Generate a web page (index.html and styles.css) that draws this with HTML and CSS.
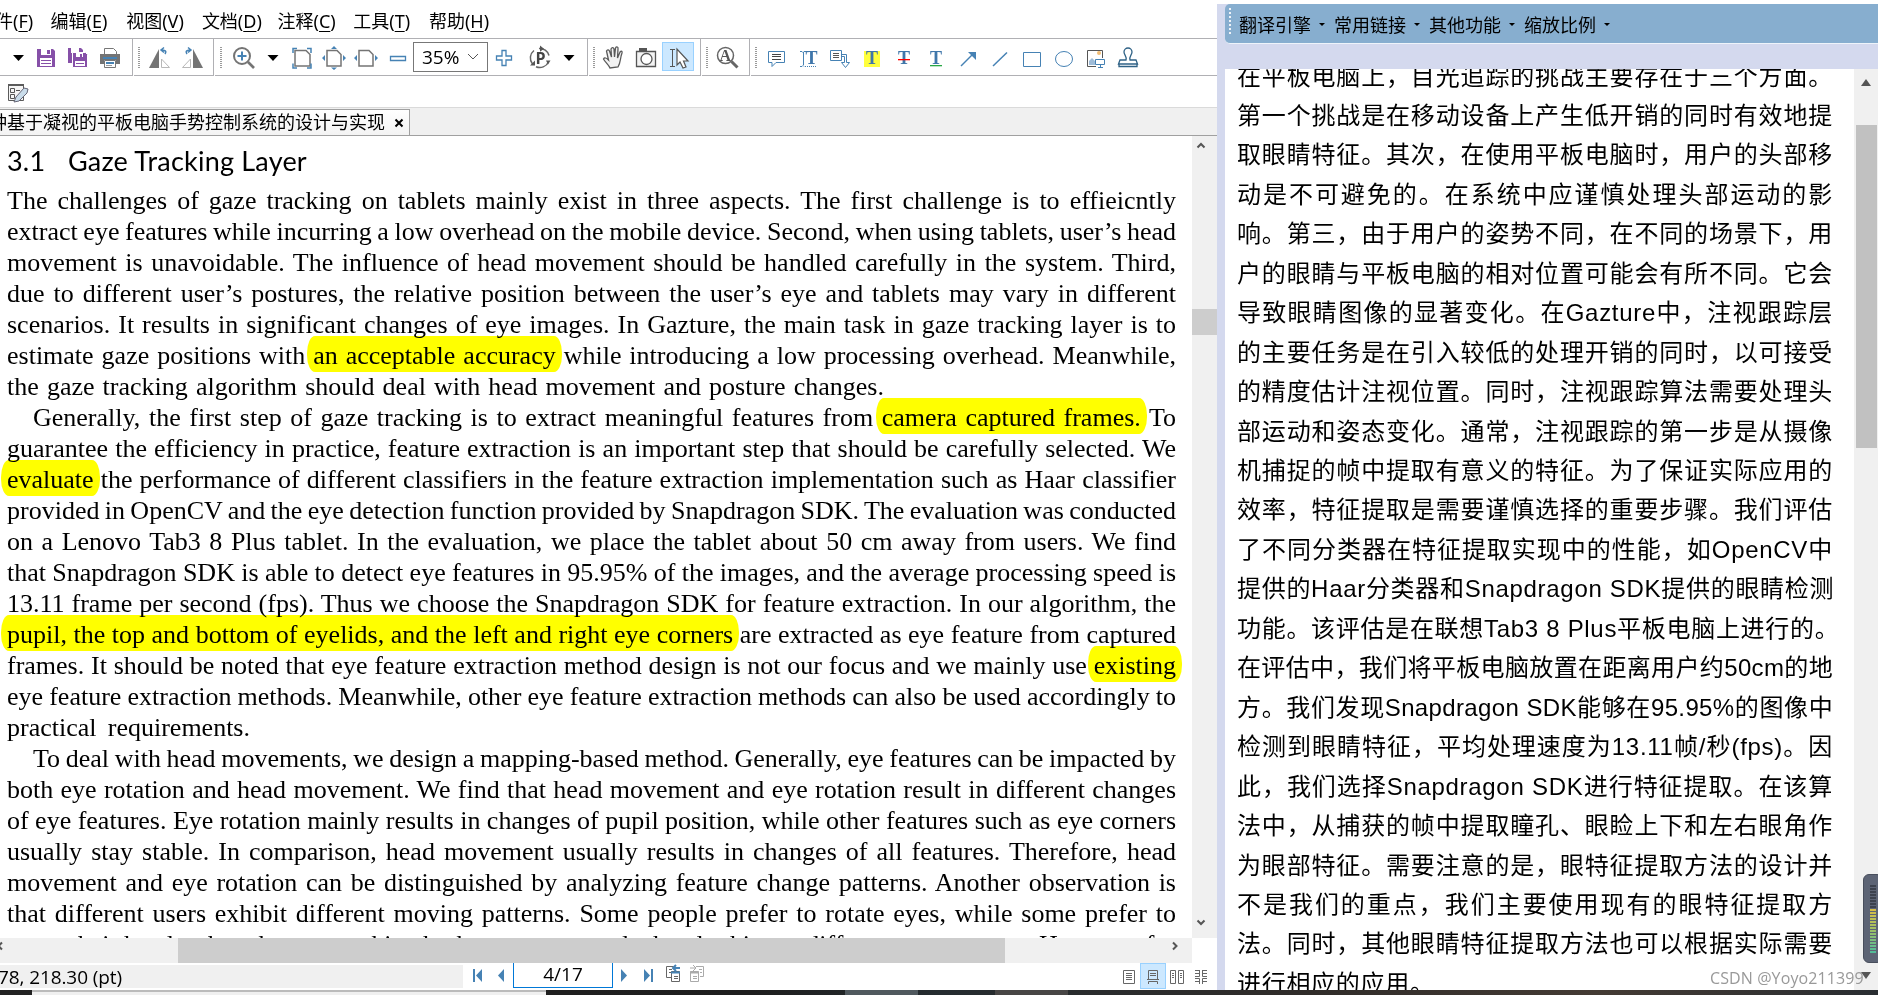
FILE: index.html
```html
<!DOCTYPE html>
<html lang="zh-CN">
<head>
<meta charset="utf-8">
<title>PDF Reader</title>
<link rel="stylesheet" href="styles.css">
</head>
<body>
<div class="screen">
<main class="windows">
<section class="reader">
  <nav class="menu"><span>件(<u>F</u>)</span><span>编辑(<u>E</u>)</span><span>视图(<u>V</u>)</span><span>文档(<u>D</u>)</span><span>注释(<u>C</u>)</span><span>工具(<u>T</u>)</span><span>帮助(<u>H</u>)</span></nav>
  <div class="tools">
    <div class="group g1">
      <svg class="tri" viewBox="0 0 22 32"><path d="M5 13h11l-5.500 6z"/></svg>
      <svg viewBox="0 0 32 32"><path fill="#8650a8" d="M7 7h16l2 2v16H7z"/><path fill="#fff" d="M11 7h10v6H11zM10 16h12v8H10z"/><path fill="#8650a8" d="M17 8h3v4h-3zM11 18h10v1H11zM11 21h10v1H11z"/></svg>
      <svg viewBox="0 0 32 32"><path fill="#8650a8" d="M6 6h13l2 2v13H6z"/><path fill="#fff" d="M9 6h8v5H9z"/><path fill="#8650a8" stroke="#fff" d="M10.500 10.500h13l2 2v13h-15z"/><path fill="#fff" d="M14 11h7v4h-7zM13 19h10v5H13z"/><path fill="#8650a8" d="M18 12h2v3h-2zM14 21h8v1h-8z"/></svg>
      <svg viewBox="0 0 32 32"><path fill="#fff" stroke="#777" d="M10.500 12V6.500h9l3 3V12"/><path fill="#747474" d="M6 12h20v10h-4v-4H10v4H6z"/><path fill="#fff" stroke="#777" d="M10.500 18.500h11v7h-11z"/><path stroke="#4682b4" stroke-width="2" d="M9 16h14M12 21h8"/><path stroke="#999" d="M12 23.500h6"/></svg>
    </div>
    <div class="group g2"><i class="grip"></i>
      <svg viewBox="0 0 32 32"><path fill="#747474" d="M15 7v19H5z"/><path fill="#fff" stroke="#b8b8b8" d="M17.500 17v8.500h8z"/><path fill="none" stroke="#4682b4" stroke-width="1.500" d="M21 12c2-3 0-4-4-4m3-2.500L17 8l3 2.500"/></svg>
      <svg viewBox="0 0 32 32"><path fill="#747474" d="M17 7v19h10z"/><path fill="#fff" stroke="#b8b8b8" d="M14.500 17v8.500h-8z"/><path fill="none" stroke="#4682b4" stroke-width="1.500" d="M11 12c-2-3 0-4 4-4m-3-2.500L15 8l-3 2.500"/></svg>
    </div>
    <div class="group g3"><i class="grip"></i>
      <svg viewBox="0 0 32 32"><circle cx="14" cy="14" r="8" fill="#fff" stroke="#747474" stroke-width="2"/><path stroke="#4682b4" stroke-width="2" d="M9.500 14h9M14 9.500v9"/><path stroke="#747474" stroke-width="2.600" d="M20 20l6 6"/></svg>
      <svg class="tri wide" viewBox="0 0 26 32"><path d="M7.500 13h11L13 19z"/></svg>
      <svg viewBox="0 0 32 32" fill="none"><path stroke="#747474" stroke-width="1.500" d="M9 8.500h11l4 4V24H9z"/><path stroke="#4682b4" stroke-width="1.500" d="M7 11V6.500h4M21 6.500h4V11M7 21.500V26h4M21 26h4v-4.500"/></svg>
      <svg viewBox="0 0 32 32" fill="none"><path stroke="#747474" stroke-width="1.500" d="M9 8.500h10l4 4V24H9z"/><path fill="#4682b4" d="M13 7l3-3 3 3zM13 25.500l3 2.500 3-2.500zM7 13l-3 3 3 3zM25 13l3 3-3 3z"/></svg>
      <svg viewBox="0 0 32 32" fill="none"><path stroke="#747474" stroke-width="1.500" d="M9 8.500h10l4 4V24H9z"/><path fill="#4682b4" d="M7 13l-3 3 3 3zM25 13l3 3-3 3z"/></svg>
      <svg viewBox="0 0 32 32" fill="none"><path stroke="#4682b4" stroke-width="1.300" d="M8.500 14.500h15v4h-15z"/></svg>
      <div class="zoom"><span>35%</span><svg viewBox="0 0 12 8"><path fill="none" stroke="#555" d="M1 1l5 5 5-5"/></svg></div>
      <svg viewBox="0 0 32 32" fill="none"><path stroke="#4682b4" stroke-width="1.300" d="M14 8.500h4V14h5.500v4H18v5.500h-4V18H8.500v-4H14z"/></svg>
      <svg class="rotate" viewBox="0 0 32 32" fill="none"><path stroke="#666" stroke-width="1.500" d="M8.500 22A9.500 9.500 0 0 1 10 8.500M15 6.500A9.500 9.500 0 0 1 25 13.500M24.500 20A9.500 9.500 0 0 1 12 24.700"/><path fill="#555" d="M16 3.500l4 3.200-4 3zM6 23.500h5v-5zM22 18.500h4.500L24 22.500z"/><text x="11.500" y="22" class="bold-letter">P</text></svg>
      <svg class="tri wide" viewBox="0 0 26 32"><path d="M7.500 13h11L13 19z"/></svg>
    </div>
    <div class="group g4"><i class="grip"></i>
      <svg viewBox="0 0 32 32"><path fill="#f2f2f2" stroke="#5a5a5a" stroke-width="1.300" d="M12 26c-1-3-5-6-6.500-9 1-2 3-1 5 1L8.500 9c1-2 2.500-1 3 0l2 6L13 7c1-2 2.500-1.500 3 0l.5 8 1-9c1-2 3-1 2.500 1l-.5 9 2.500-6c1.500-1.500 2.500-.5 2 1-2 5-1 9-4 14z"/></svg>
      <svg viewBox="0 0 32 32"><path fill="#f3f3f3" stroke="#555" stroke-width="1.300" d="M6.500 9.500h19v15h-19z"/><path fill="#555" d="M9 6h8v4H9z"/><circle cx="16.500" cy="17" r="5.500" fill="#fff" stroke="#555" stroke-width="1.300"/></svg>
      <svg class="picked" viewBox="0 0 32 29" fill="none"><path stroke="#555" d="M8 7.500h5M8 24.500h5M10.500 8v16"/><path fill="#fff" stroke="#555" stroke-width="1.200" d="M15 7v16l3-3 3 6 3-1-2.500-6H26z"/></svg>
    </div>
    <div class="group g5"><i class="grip"></i>
      <svg viewBox="0 0 32 32"><circle cx="14.500" cy="13.500" r="8" fill="#fff" stroke="#666" stroke-width="1.500"/><text x="8.500" y="19" class="serif-letter">A</text><path stroke="#666" stroke-width="3" d="M20.500 19.500l6 6"/></svg>
    </div>
    <div class="group g6"><i class="grip"></i>
      <svg viewBox="0 0 32 32" fill="none"><path stroke="#4682b4" d="M8.500 9.500h16v11H16l-4 4v-4H8.500z"/><path stroke="#444" d="M12 12.500h9M12 14.500h9M12 17.500h9"/></svg>
      <svg viewBox="0 0 32 32" fill="none"><path stroke="#4682b4" d="M8 9.500h2l1 1 1-1h2M11.500 10v13M8 24.500h2l1-1 1 1"/><path stroke="#4682b4" stroke-dasharray="1 1" d="M13 24.500h12"/><text x="13.500" y="22" class="t-letter">T</text></svg>
      <svg viewBox="0 0 32 32" fill="none"><path stroke="#4682b4" d="M6.500 8.500h11v10h-11zM17.500 12.500h5v8h3l-4 5-4-5h3v-6h-3"/><path stroke="#555" d="M9 11.500h6M9 13.500h6M9 15.500h6"/></svg>
      <svg viewBox="0 0 32 32"><path fill="#ffff3d" d="M8 9h16v16H8z"/><text x="10" y="22" class="t-letter">T</text></svg>
      <svg viewBox="0 0 32 32"><text x="10" y="22" class="t-letter">T</text><path fill="red" d="M10 17h12v1.300H10z"/></svg>
      <svg viewBox="0 0 32 32"><text x="10" y="21.500" class="t-letter">T</text><path fill="#29a745" d="M10 23h12v1.300H10z"/></svg>
      <svg viewBox="0 0 32 32"><path stroke="#4682b4" stroke-width="1.500" d="M9 24l11-11"/><path fill="#4682b4" d="M16 10h8v8z"/></svg>
      <svg viewBox="0 0 32 32"><path stroke="#4682b4" stroke-width="1.500" d="M9 24L23 10.500"/></svg>
      <svg viewBox="0 0 32 32"><path fill="none" stroke="#4682b4" d="M7.500 10.500h17v14h-17z"/></svg>
      <svg viewBox="0 0 32 32"><ellipse cx="16" cy="17" rx="8.500" ry="7.500" fill="none" stroke="#4682b4"/></svg>
      <svg viewBox="0 0 32 32" fill="none"><path stroke="#555" d="M16 24.500H7.500v-16h15V16"/><circle cx="19" cy="11" r="2" fill="#f2bd75"/><path fill="#9fbcd8" d="M9 23v-4l3-3 3 3v4z"/><path stroke="#4682b4" d="M15.500 17.500h9v5h-9zM18 25.500h5M20.500 23v2"/></svg>
      <svg viewBox="0 0 32 32" fill="none"><path stroke="#2f6286" stroke-width="1.300" d="M14 18c1-4-2-5-2-8a4 4 0 0 1 8 0c0 3-3 4-2 8h6l1.500 4h-19L8 18zM7 22v2.500h18V22"/></svg>
    </div>
  </div>
  <div class="tools-second"><svg viewBox="0 0 24 24" fill="none"><path fill="#f5f5f5" stroke="#5b5b5b" d="M2.500 3.500h15v16h-15z"/><path fill="#5b5b5b" d="M2 3h16v2H2z"/><path stroke="#555" d="M4.500 7.500h4v4h-4zM4.500 13.500h4v4h-4zM10 9.500h4M10 15.500h3"/><path fill="#c9dcea" stroke="#667" d="M8 21l2-5 8-9 4 1-1 4-8 8z"/></svg></div>
  <div class="tabs"><div class="tab"><span>种基于凝视的平板电脑手势控制系统的设计与实现</span><svg viewBox="0 0 10 10"><path stroke="#000" stroke-width="2" d="M1.500 1.500l7 7M8.500 1.500l-7 7"/></svg></div></div>
  <div class="viewport">
    <article class="page" lang="en">
      <h2><span>3.1</span><span>Gaze Tracking Layer</span></h2>
      <p>The challenges of gaze tracking on tablets mainly exist in three aspects. The first challenge is to effieicntly</p>
      <p>extract eye features while incurring a low overhead on the mobile device. Second, when using tablets, user’s head</p>
      <p>movement is unavoidable. The influence of head movement should be handled carefully in the system. Third,</p>
      <p>due to different user’s postures, the relative position between the user’s eye and tablets may vary in different</p>
      <p>scenarios. It results in significant changes of eye images. In Gazture, the main task in gaze tracking layer is to</p>
      <p>estimate gaze positions with <mark>an acceptable accuracy</mark> while introducing a low processing overhead. Meanwhile,</p>
      <p class="w7">the gaze tracking algorithm should deal with head movement and posture changes.</p>
      <p class="first">Generally, the first step of gaze tracking is to extract meaningful features from <mark>camera captured frames.</mark> To</p>
      <p>guarantee the efficiency in practice, feature extraction is an important step that should be carefully selected. We</p>
      <p><mark>evaluate</mark> the performance of different classifiers in the feature extraction implementation such as Haar classifier</p>
      <p>provided in OpenCV and the eye detection function provided by Snapdragon SDK. The evaluation was conducted</p>
      <p>on a Lenovo Tab3 8 Plus tablet. In the evaluation, we place the tablet about 50 cm away from users. We find</p>
      <p>that Snapdragon SDK is able to detect eye features in 95.95% of the images, and the average processing speed is</p>
      <p>13.11 frame per second (fps). Thus we choose the Snapdragon SDK for feature extraction. In our algorithm, the</p>
      <p><mark>pupil, the top and bottom of eyelids, and the left and right eye corners</mark> are extracted as eye feature from captured</p>
      <p>frames. It should be noted that eye feature extraction method design is not our focus and we mainly use <mark>existing</mark></p>
      <p>eye feature extraction methods. Meanwhile, other eye feature extraction methods can also be used accordingly to</p>
      <p class="w18">practical requirements.</p>
      <p class="first">To deal with head movements, we design a mapping-based method. Generally, eye features can be impacted by</p>
      <p>both eye rotation and head movement. We find that head movement and eye rotation result in different changes</p>
      <p>of eye features. Eye rotation mainly results in changes of pupil position, while other features such as eye corners</p>
      <p>usually stay stable. In comparison, head movement usually results in changes of all features. Therefore, head</p>
      <p>movement and eye rotation can be distinguished by analyzing feature change patterns. Another observation is</p>
      <p>that different users exhibit different moving patterns. Some people prefer to rotate eyes, while some prefer to</p>
      <p>move their heads when they are making both eyes move and when looking at different screen areas. However, for</p>
    </article>
    <div class="vbar"><svg viewBox="0 0 10 8"><path d="M1.500 6.500L5 3l3.500 3.500"/></svg><i></i><svg viewBox="0 0 10 8"><path d="M1.500 1.500L5 5l3.500-3.500"/></svg></div>
  </div>
  <div class="hbar"><div class="track"><svg class="left" viewBox="0 0 8 10"><path d="M2 1.500L-1.500 5 2 8.500"/></svg><i></i><svg class="right" viewBox="0 0 8 10"><path d="M2 1.500L5.500 5 2 8.500"/></svg></div></div>
  <footer class="status">
    <div class="coords">78, 218.30 (pt)</div>
    <div class="pager">
      <svg viewBox="0 0 24 24"><path d="M8 6h2v13H8zM17 6v13l-6-6.500z"/></svg><svg viewBox="0 0 24 24"><path d="M15 6v13l-6-6.500z"/></svg>
      <div class="number">4/17</div>
      <svg viewBox="0 0 24 24"><path d="M8 6v13l6-6.500z"/></svg><svg viewBox="0 0 24 24"><path d="M14 6h2v13h-2zM7 6v13l6-6.500z"/></svg>
      <svg class="outline" viewBox="0 0 24 24"><path d="M11 14.500H5.500v-11h7"/><path d="M8 6.500h3M8 9.500h2M10.500 8.500h8v10h-8zM13 13.500h4M13 15.500h4"/><path class="blue" stroke-width="2" d="M10 9.500h9M13 5h6m-4-3l-3 3 3 3"/></svg>
      <svg class="outline faint" viewBox="0 0 24 24"><path d="M5.500 8.500h8v10h-8zM8 13.500h4M8 15.500h4M11 3.500h7.500v10H15M5 5h6M8 2l3 3-3 3M14 6.500h3M15 9.500h2"/><path stroke-width="2" d="M5 9.500h9"/></svg>
    </div>
    <div class="views">
      <svg viewBox="0 0 24 24"><path d="M6.500 6.500h11v13h-11zM9 9.500h6M9 11.500h6M9 13.500h6M9 15.500h6"/></svg>
      <svg class="picked" viewBox="0 0 24 24"><path d="M7.500 6.500h9v9h-9zM9 9.500h6M9 11.500h6M6 15.500h12M7.500 20v-2.500h9V20"/></svg>
      <svg viewBox="0 0 24 24"><path d="M5.500 6.500h5v13h-5zM13.500 6.500h5v13h-5zM7 9.500h2M7 11.500h2M7 13.500h2M15 9.500h2M15 11.500h2M15 13.500h2"/></svg>
      <svg viewBox="0 0 24 24"><path d="M10.500 6v6.500H6M13.500 6v6.500H18M10.500 20v-5.500H6M13.500 20v-5.500H18M6 6.500h4M14 6.500h4M6 9.500h4M14 9.500h4M6 17.500h4M14 17.500h4"/></svg>
    </div>
  </footer>
</section>
<section class="translator">
  <header><i class="dots"></i><span>翻译引擎</span><span>常用链接</span><span>其他功能</span><span>缩放比例</span></header>
  <div class="result">
    <div class="text">
      <p>在平板电脑上，目光追踪的挑战主要存在于三个方面。</p>
      <p>第一个挑战是在移动设备上产生低开销的同时有效地提</p>
      <p>取眼睛特征。其次，在使用平板电脑时，用户的头部移</p>
      <p>动是不可避免的。在系统中应谨慎处理头部运动的影</p>
      <p>响。第三，由于用户的姿势不同，在不同的场景下，用</p>
      <p>户的眼睛与平板电脑的相对位置可能会有所不同。它会</p>
      <p>导致眼睛图像的显著变化。在Gazture中，注视跟踪层</p>
      <p>的主要任务是在引入较低的处理开销的同时，以可接受</p>
      <p>的精度估计注视位置。同时，注视跟踪算法需要处理头</p>
      <p>部运动和姿态变化。通常，注视跟踪的第一步是从摄像</p>
      <p>机捕捉的帧中提取有意义的特征。为了保证实际应用的</p>
      <p>效率，特征提取是需要谨慎选择的重要步骤。我们评估</p>
      <p>了不同分类器在特征提取实现中的性能，如OpenCV中</p>
      <p>提供的Haar分类器和Snapdragon SDK提供的眼睛检测</p>
      <p>功能。该评估是在联想Tab3 8 Plus平板电脑上进行的。</p>
      <p class="tight">在评估中，我们将平板电脑放置在距离用户约50cm的地</p>
      <p class="tight">方。我们发现Snapdragon SDK能够在95.95%的图像中</p>
      <p>检测到眼睛特征，平均处理速度为13.11帧/秒(fps)。因</p>
      <p>此，我们选择Snapdragon SDK进行特征提取。在该算</p>
      <p>法中，从捕获的帧中提取瞳孔、眼睑上下和左右眼角作</p>
      <p>为眼部特征。需要注意的是，眼特征提取方法的设计并</p>
      <p>不是我们的重点，我们主要使用现有的眼特征提取方</p>
      <p>法。同时，其他眼睛特征提取方法也可以根据实际需要</p>
      <p class="end">进行相应的应用。</p>
    </div>
    <div class="rbar"><b class="up"></b><i></i><b class="down"></b></div>
  </div>
</section>
</main>
<div class="taskbar"><i class="preview"></i><i class="app one"></i><i class="app two"></i></div>
<div class="watermark">CSDN @Yoyo211399</div>
<div class="meter"><i class="off"></i><i class="on"></i></div>
</div>
</body>
</html>
```
FILE: styles.css
```css
* { box-sizing: border-box; }
body { margin: 0; background: #fff; color: #000; font: 18px/24px "Open Sans", "Noto Sans CJK SC", sans-serif; }
p, h2 { margin: 0; font-weight: 400; }
svg { display: block; flex: none; }
.screen { position: relative; width: 1878px; height: 995px; overflow: hidden; display: flex; flex-direction: column; }
.windows { display: flex; height: 990px; }
.reader { width: 1217px; display: flex; flex-direction: column; overflow: hidden; }
.menu { height: 38px; padding-top: 9px; display: flex; gap: 17px; font-family: "Noto Sans", "Noto Sans CJK SC", sans-serif; white-space: nowrap; }
.menu span { width: 58.700px; }
.menu span:first-child { width: 33.500px; text-indent: -5px; }
.menu u { text-underline-offset: 3px; text-decoration-thickness: 1px; }
.tools { height: 38px; display: flex; gap: 1px; border-top: 1px solid #b0b0b4; }
.group { display: flex; padding-top: 3px; border-right: 1px solid #b0b0b4; border-bottom: 1px solid #b0b0b4; }
.group > svg { width: 32px; height: 32px; }
.group > .tri { width: 22px; }
.group > .wide { width: 26px; }
.g1 { width: 133px; padding-left: 8px; }
.g2 { width: 80px; padding-left: 4px; }
.g3 { width: 373px; padding-left: 5px; }
.g4 { width: 112px; padding-left: 4px; }
.g5 { width: 48px; padding-left: 4px; }
.g6 { flex: 1; padding-left: 4px; border-right: 0; }
.grip { width: 2px; height: 21px; margin: 5px 3px 0 0; background: repeating-linear-gradient(#9a9a9a 0 1px, #fff 1px 2px); }
.g2 .grip { margin-right: 4px; }
.g3 .grip { margin-right: 6px; }
.g3 .rotate { margin-left: 4px; }
.picked { background: #cce8ff; outline: 1px solid #99d1ff; outline-offset: -1px; }
.group > .picked { height: 29px; }
.zoom { width: 75px; height: 30px; margin-left: -1px; border: 1px solid #777; padding: 0 8px; display: flex; align-items: center; justify-content: space-between; font: 19px/28px "Open Sans", sans-serif; }
.zoom svg { width: 12px; height: 8px; }
.bold-letter { font: bold 16px "Open Sans", sans-serif; fill: #444; }
.serif-letter { font: bold 16px "Liberation Serif", serif; fill: #555; }
.t-letter { font: bold 18px "Liberation Serif", serif; fill: #3f76aa; }
.tools-second { height: 31px; padding: 5px 0 0 6px; }
.tools-second svg { width: 24px; height: 24px; }
.tabs { height: 29px; padding-top: 1px; background: #f0f0f0; border-top: 1px solid #dadada; border-bottom: 1px solid #a0a0a0; }
.tab { width: 410px; height: 26px; border: solid #a0a0a0; border-width: 1px 1px 0 0; background: linear-gradient(#fff, #f3f3f3); display: flex; gap: 9px; font: 18px/23px "Noto Sans CJK SC", sans-serif; white-space: nowrap; }
.tab span { margin-left: -11px; }
.tab svg { width: 10px; height: 10px; margin-top: 8px; }
.viewport { height: 802px; display: flex; overflow: hidden; }
.page { width: 1192px; padding: 9px 16px 0 7px; font: 26px/31px "Liberation Serif", serif; word-spacing: -1.300px; }
.page h2 { height: 40px; display: flex; gap: 24px; font: 27px/32px Lato, sans-serif; letter-spacing: .2px; word-spacing: 0; }
.page h2 span:first-child { width: 37px; }
.page p { height: 31px; white-space: nowrap; text-align: justify; text-align-last: justify; }
.page .first { padding-left: 26px; }
.page .w7 { width: 877px; }
.page .w18 { width: 243px; }
mark { color: inherit; background: #ff0; padding: 5px 6px 2px; margin: 0 -6px; border-radius: 8px / 17px; mix-blend-mode: multiply; }
.vbar { width: 25px; background: #f0f0f0; display: flex; flex-direction: column; align-items: center; padding: 5px 7px 11px 0; }
.vbar svg { width: 10px; height: 8px; }
.vbar path, .hbar path { fill: none; stroke: #555; stroke-width: 2; }
.vbar i { width: 25px; height: 26px; margin: 160px -7px auto 0; background: #cdcdcd; }
.hbar { height: 25px; }
.track { width: 1192px; height: 25px; background: #f0f0f0; display: flex; }
.track i { width: 827px; background: #cdcdcd; }
.track svg { width: 8px; height: 10px; margin-top: 3px; }
.track .left { margin-right: 170px; }
.track .right { margin-left: 166px; }
.status { height: 26px; display: flex; }
.coords { width: 463px; height: 23px; margin-top: 2px; background: #f0f0f0; font-size: 19px; line-height: 24px; text-indent: -2px; letter-spacing: -.1px; }
.pager { display: flex; padding-left: 2px; }
.pager svg, .views svg { width: 24px; height: 24px; fill: #4682b4; }
.number { width: 100px; height: 25px; border: 1px solid #0078d7; border-top: 0; text-align: center; font-size: 19px; line-height: 22px; }
.pager .outline, .views svg { fill: none; stroke: #666; }
.pager .faint { stroke: #aaa; }
.blue { stroke: #4682b4; }
.views { display: flex; margin: 1px 4px 0 auto; }
.views .picked { outline-offset: 0; }
.translator { flex: 1; display: flex; flex-direction: column; margin-top: 4px; background: #d4d9ee; padding-left: 8px; }
.translator header { height: 40px; padding: 8px 0 0 5px; background: #87aecf; border-bottom: 1px solid #eef4fa; border-radius: 5px 0 0 5px; display: flex; font-family: "Noto Sans CJK SC", sans-serif; }
.dots { width: 2px; height: 27px; margin: -4px 8px 0 -1px; background: repeating-linear-gradient(#eef3f8 0 2px, transparent 2px 4px); }
.translator header span { width: 95px; height: 24px; display: flex; align-items: center; }
.translator header span::after { content: ""; margin-left: 8px; border: 3px solid transparent; border-top-color: #000; border-bottom: 0; }
.result { height: 921px; margin-top: 25px; background: #fff; display: flex; overflow: hidden; }
.text { width: 629px; margin-top: -12.500px; padding: 0 21px 0 12px; font: 24px/39.460px "Liberation Sans", "Noto Sans CJK SC", sans-serif; letter-spacing: .7px; }
.text p { height: 39.460px; white-space: nowrap; text-align: justify; text-align-last: justify; }
.text .tight { letter-spacing: .35px; }
.text .end { text-align-last: left; }
.rbar { width: 24px; background: #f0f0f0; display: flex; flex-direction: column; align-items: center; padding: 10px 0 11px; }
.rbar b { border: 5px solid transparent; }
.rbar .up { border-top: 0; border-bottom: 7px solid #555; }
.rbar .down { border-bottom: 0; border-top: 7px solid #555; }
.rbar i { width: 21px; height: 323px; margin: 39px 0 auto; background: #c1c1c1; }
.taskbar { height: 5px; display: flex; background: linear-gradient(90deg, #222, #1e1e1e 40%, #252c30 50%, #302c29 70%, #443b34 85%, #292d31); }
.preview { width: 514px; margin-left: 32px; border-top: 2px solid #bbb; background: #f0f0f0; }
.app { width: 73px; background: #50595e; }
.one { margin-left: 299px; }
.two { margin-left: 77px; background: #484645; }
.watermark { position: absolute; left: 1710px; top: 966px; font: 16px/24px "Open Sans", sans-serif; color: #999; letter-spacing: .1px; }
.meter { position: absolute; left: 1863px; top: 874px; width: 20px; height: 89px; padding: 10px 0 0 6px; border: 1px solid #484e5c; border-radius: 6px; background: #5d6475; }
.meter i { display: block; width: 6px; }
.off { height: 24px; background: repeating-linear-gradient(#3d424e 0 2px, transparent 2px 3px); }
.on { height: 45px; background: repeating-linear-gradient(transparent 0 2px, #5d6475 2px 3px), linear-gradient(#d8bd45, #a8c060 40%, #4cbc9c); }
```
